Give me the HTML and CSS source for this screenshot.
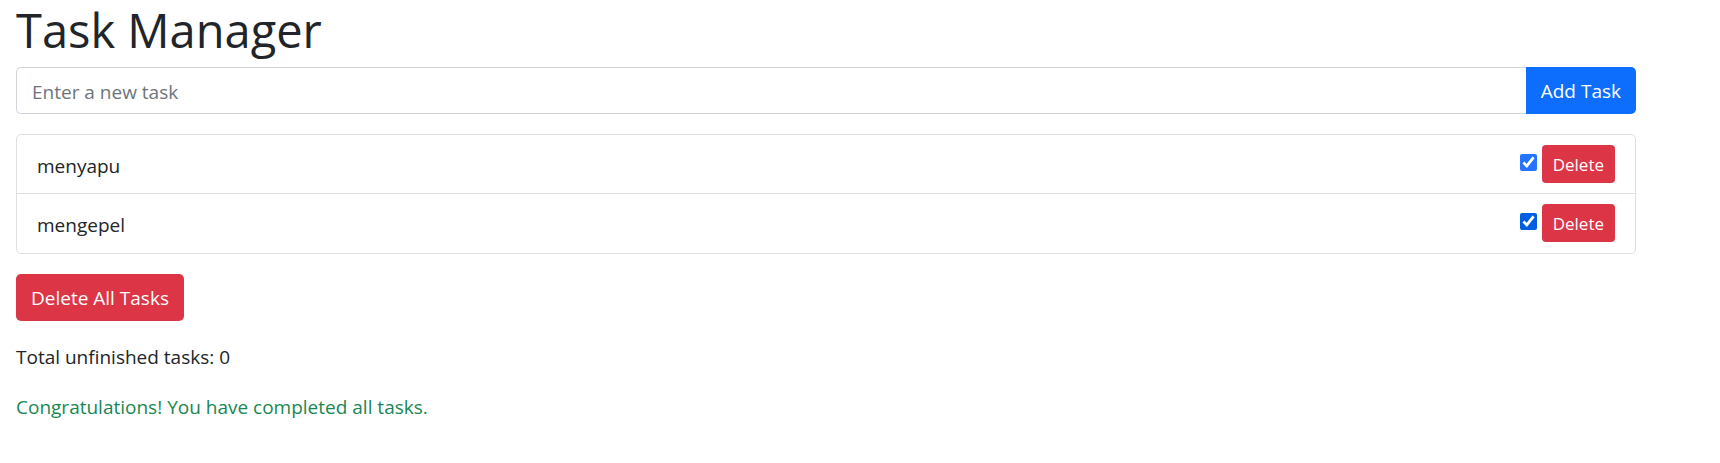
FILE: index.html
```html
<!DOCTYPE html>
<html lang="en">
<head>
<meta charset="utf-8">
<meta name="viewport" content="width=device-width, initial-scale=1">
<title>Task Manager</title>
<link rel="stylesheet" href="styles.css">
</head>
<body>
<main class="container">
  <h1 class="title">Task Manager</h1>
  <form class="input-group">
    <input class="task-input" type="text" placeholder="Enter a new task" aria-label="New task">
    <button class="btn btn-primary" type="button">Add Task</button>
  </form>
  <ul class="task-list">
    <li class="task">
      <label class="task-name" for="task-1">menyapu</label>
      <input class="task-check task-check-light" id="task-1" type="checkbox" checked>
      <button class="btn btn-danger btn-small" type="button">Delete</button>
    </li>
    <li class="task">
      <label class="task-name" for="task-2">mengepel</label>
      <input class="task-check" id="task-2" type="checkbox" checked>
      <button class="btn btn-danger btn-small" type="button">Delete</button>
    </li>
  </ul>
  <button class="btn btn-danger" type="button">Delete All Tasks</button>
  <div class="status">
    <p class="summary">Total unfinished tasks: 0</p>
    <p class="summary success">Congratulations! You have completed all tasks.</p>
  </div>
</main>
</body>
</html>
```

FILE: styles.css
```css
* { box-sizing: border-box; }

body {
  margin: 0;
  background: #fff;
  color: #212529;
  font-family: "Segoe UI", "Open Sans", "Noto Sans", sans-serif;
  font-size: 19px;
  line-height: 30px;
}

.container {
  max-width: 1652px;
  padding: 0 16px;
}

.title {
  margin: 0 0 7px;
  font-size: 47px;
  font-weight: 400;
  line-height: 60px;
}

.input-group {
  display: flex;
  margin-bottom: 20px;
}

.task-input {
  flex: 1;
  min-width: 0;
  padding: 9px 15px 6px;
  border: 1px solid #ced4da;
  border-right: 0;
  border-radius: 5px 0 0 5px;
  background: #fff;
  color: inherit;
  font: inherit;
}

.task-input::placeholder {
  color: #6c757d;
  opacity: 1;
}

.btn {
  padding: 9px 15px 8px;
  border: 0;
  border-radius: 5px;
  color: #fff;
  font: inherit;
  cursor: pointer;
}

.btn-primary {
  border-radius: 0 5px 5px 0;
  background: #0d6efd;
}

.btn-danger { background: #dc3545; }

.btn-small {
  padding: 7px 11px 5px;
  border-radius: 4px;
  font-size: 17px;
  line-height: 26px;
}

.task-list {
  margin: 0 0 20px;
  padding: 0 0 1px;
  border: 1px solid #dfdfdf;
  border-radius: 5px;
  list-style: none;
}

.task {
  display: flex;
  align-items: center;
  padding: 10px 20px;
}

.task + .task { border-top: 1px solid #dfdfdf; }

.task-name {
  flex: 1;
  padding-top: 4px;
}

.task-check {
  width: 17px;
  height: 17px;
  margin: 0 5px 3px 0;
  accent-color: #005fe0;
}

.task-check-light { accent-color: #2474ff; }

.status { padding-top: 1px; }

.summary { margin: 20px 0; }

.success { color: #198754; }
```
